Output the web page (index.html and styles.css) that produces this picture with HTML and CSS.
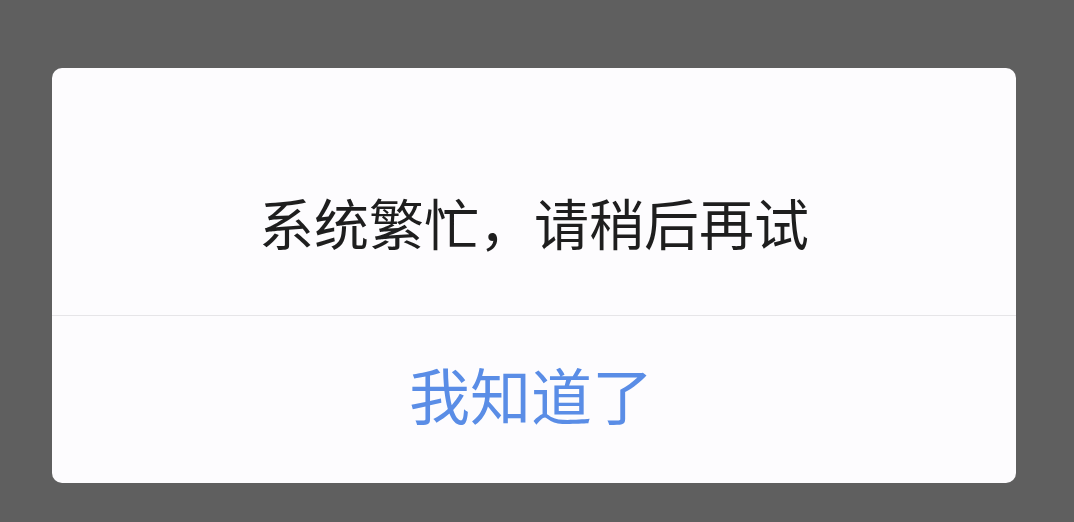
FILE: index.html
```html
<!DOCTYPE html>
<html lang="zh-CN">
<head>
<meta charset="utf-8">
<link rel="stylesheet" href="styles.css">
</head>
<body>
<div class="page">
  <div class="dialog">
    <div class="message">系统繁忙，请稍后再试</div>
    <div class="actions">
      <div class="btn">我知道了</div>
    </div>
  </div>
</div>
</body>
</html>
```
FILE: styles.css
```css
html, body {
  margin: 0;
  padding: 0;
  background: #5f5f5f;
}
.page {
  width: 1074px;
  height: 522px;
  padding: 68px 0 0 52px;
  box-sizing: border-box;
}
.dialog {
  width: 964px;
  height: 415px;
  background: #fdfcfe;
  border-radius: 10px;
  display: flex;
  flex-direction: column;
  overflow: hidden;
  font-family: "Noto Sans CJK SC", "Noto Sans", sans-serif;
}
.message {
  height: 248px;
  border-bottom: 1px solid #e6e5e8;
  display: flex;
  align-items: center;
  justify-content: center;
  padding-top: 60px;
  box-sizing: border-box;
  font-size: 55px;
  color: #1e1e1e;
  line-height: 1;
}
.actions {
  flex: 1;
  display: flex;
  align-items: center;
  justify-content: center;
  padding-bottom: 12px;
}
.btn {
  font-size: 61px;
  color: #5a8de6;
  line-height: 1;
  margin-right: 6px;
}
```
